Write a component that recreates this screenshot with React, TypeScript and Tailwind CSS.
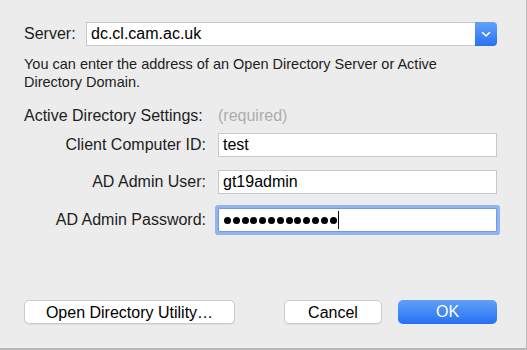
import React from "react";

function Chevron() {
  return (
    <svg width="10" height="7" viewBox="0 0 10 7" fill="none">
      <path d="M1.5 1.5 L5 5 L8.5 1.5" stroke="white" strokeWidth="1.6" strokeLinecap="round" strokeLinejoin="round" />
    </svg>
  );
}

function Field({ value }: { value: string }) {
  return (
    <div className="w-[279px] h-[24px] bg-white border border-[#c8c8c8] flex items-center pl-[4px] text-[16px] text-black">
      {value}
    </div>
  );
}

export default function App() {
  const dots = Array.from({ length: 13 });
  return (
    <div
      className="w-[527px] h-[350px] bg-[#ececec] flex flex-col text-[#1d1d1d]"
      style={{ fontFamily: '"Liberation Sans", Arial, sans-serif' }}
    >
      <div className="flex-1 flex flex-col pl-[24px] pt-[22px] pb-[24px] border-r border-[#bdbdbd]">
        {/* Server row */}
        <div className="flex items-center">
          <div className="w-[62px] text-[16px]">Server:</div>
          <div className="w-[411px] h-[24px] flex">
            <div className="flex-1 bg-white border border-r-0 border-[#c8c8c8] flex items-center pl-[4px] text-[16px] text-black">
              dc.cl.cam.ac.uk
            </div>
            <div className="w-[22px] h-[24px] rounded-r-[4px] bg-gradient-to-b from-[#62a2f8] to-[#2a6ff2] flex items-center justify-center">
              <Chevron />
            </div>
          </div>
        </div>

        <div className="mt-[9px] w-[430px] text-[14.5px] leading-[18px]">
          You can enter the address of an Open Directory Server or Active Directory Domain.
        </div>

        <div className="mt-[13px] h-[24px] flex items-center text-[16px]">
          <div className="w-[194px]">Active Directory Settings:</div>
          <div className="text-[#acacac]">(required)</div>
        </div>

        <div className="mt-[5px] flex items-center">
          <div className="w-[182px] text-right text-[16px] mr-[12px]">Client Computer ID:</div>
          <Field value="test" />
        </div>

        <div className="mt-[13px] flex items-center">
          <div className="w-[182px] text-right text-[16px] mr-[12px]">AD Admin User:</div>
          <Field value="gt19admin" />
        </div>

        <div className="mt-[14px] flex items-center">
          <div className="w-[182px] text-right text-[16px] mr-[12px]">AD Admin Password:</div>
          <div className="w-[279px] h-[24px] bg-white border border-[#6f9be6] rounded-[1px] shadow-[0_0_0_3px_#90b4f0] flex items-center pl-[5px]">
            <div className="flex items-center gap-[1.8px]">
              {dots.map((_, i) => (
                <span key={i} className="block w-[7px] h-[7px] rounded-full bg-black" />
              ))}
            </div>
            <span className="block w-[1px] h-[18px] bg-black ml-[1px]" />
          </div>
        </div>

        <div className="mt-auto flex items-center text-[16px]">
          <button className="w-[211px] h-[24px] bg-white border border-[#cbcbcb] rounded-[5px] shadow-[0_1px_0_rgba(0,0,0,0.06)] text-black">
            Open Directory Utility…
          </button>
          <button className="ml-[49px] w-[98px] h-[24px] bg-white border border-[#cbcbcb] rounded-[5px] shadow-[0_1px_0_rgba(0,0,0,0.06)] text-black">
            Cancel
          </button>
          <button className="ml-[16px] w-[99px] h-[24px] rounded-[5px] bg-gradient-to-b from-[#5fa0f8] to-[#2670f2] text-white">
            OK
          </button>
        </div>
      </div>
      <div className="h-[2px] bg-[#b8b8b8]" />
    </div>
  );
}
